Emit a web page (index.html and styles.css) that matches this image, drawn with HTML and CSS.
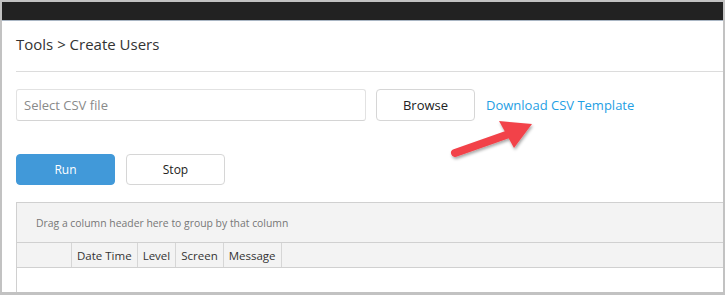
FILE: index.html
```html
<!DOCTYPE html>
<html lang="en">
<head>
  <meta charset="utf-8">
  <title>Tools - Create Users</title>
  <link rel="stylesheet" href="styles.css">
</head>
<body>
  <div class="frame">
    <div class="topbar"></div>

    <div class="content">
      <h1 class="title">Tools &gt; Create Users</h1>

      <div class="file-row">
        <input class="file-input" type="text" placeholder="Select CSV file">
        <button class="btn">Browse</button>
        <a class="link" href="#">Download CSV Template</a>
        <svg class="arrow" width="100" height="50" viewBox="0 0 100 50">
          <defs>
            <filter id="shadow" x="-20%" y="-40%" width="140%" height="180%">
              <feDropShadow dx="1" dy="2" stdDeviation="1.5" flood-color="#000" flood-opacity="0.35"/>
            </filter>
          </defs>
          <g filter="url(#shadow)" fill="#f2434a">
            <path d="M8 36 L62 17" stroke="#f2434a" stroke-width="8" stroke-linecap="round"/>
            <polygon points="52,4 85,7 67,31"/>
          </g>
        </svg>
      </div>

      <div class="action-row">
        <button class="btn btn-primary">Run</button>
        <button class="btn">Stop</button>
      </div>

      <div class="grid">
        <div class="group-panel">Drag a column header here to group by that column</div>
        <div class="grid-header">
          <div class="cell cell-first"></div>
          <div class="cell">Date Time</div>
          <div class="cell">Level</div>
          <div class="cell">Screen</div>
          <div class="cell">Message</div>
        </div>
        <div class="grid-body"></div>
      </div>
    </div>
  </div>
</body>
</html>
```

FILE: styles.css
```css
body {
  margin: 0;
  font-family: 'Open Sans', 'Noto Sans', Arial, sans-serif;
  color: #333;
  background: #fff;
}

.frame {
  width: 725px;
  height: 295px;
  box-sizing: border-box;
  border: 2px solid #c2c2c2;
  border-bottom-width: 3px;
  overflow: hidden;
  display: flex;
  flex-direction: column;
}

.topbar {
  height: 18px;
  background: #222;
  border-bottom: 1px solid #aab6c4;
  flex-shrink: 0;
}

.content {
  padding-left: 14px;
  flex: 1;
  display: flex;
  flex-direction: column;
}

.title {
  margin: 0;
  height: 50px;
  line-height: 47px;
  font-size: 15px;
  font-weight: normal;
  color: #333;
  border-bottom: 1px solid #dcdcdc;
}

.file-row {
  display: flex;
  align-items: center;
  margin-top: 17px;
  position: relative;
}

.file-input {
  width: 350px;
  height: 32px;
  box-sizing: border-box;
  border: 1px solid #e2e2e2;
  border-bottom-color: #d4d4d4;
  border-radius: 3px;
  padding: 0 7px;
  font-family: inherit;
  font-size: 13px;
  color: #333;
  outline: none;
}

.file-input::placeholder {
  color: #8a8a8a;
}

.btn {
  width: 99px;
  height: 32px;
  margin-left: 10px;
  box-sizing: border-box;
  border: 1px solid #d6d6d6;
  border-radius: 4px;
  background: #fff;
  font-family: inherit;
  font-size: 12px;
  color: #222;
  cursor: pointer;
}

.file-row .btn {
  font-size: 13px;
}

.link {
  margin-left: 11px;
  margin-top: -1px;
  font-size: 13px;
  color: #1fa0e4;
  text-decoration: none;
}

/* red callout arrow over the page */
.arrow {
  position: absolute;
  left: 431px;
  top: 28px;
}

.action-row {
  display: flex;
  margin-top: 33px;
}

.action-row .btn {
  height: 31px;
  margin-left: 11px;
}

.action-row .btn:first-child {
  margin-left: 0;
}

.btn-primary {
  background: #4199d9;
  border-color: #4199d9;
  color: #fff;
}

.grid {
  margin-top: 17px;
  flex: 1;
  border: 1px solid #d0d0d0;
  border-right: none;
  border-bottom: none;
  display: flex;
  flex-direction: column;
}

.group-panel {
  height: 39px;
  line-height: 40px;
  background: #f3f3f3;
  border-bottom: 1px solid #d0d0d0;
  padding-left: 19px;
  font-size: 10.4px;
  color: #777;
}

.grid-header {
  display: flex;
  height: 24px;
  background: #f3f3f3;
  border-bottom: 1px solid #d0d0d0;
}

.cell {
  line-height: 25px;
  padding: 0 5px;
  font-size: 11.5px;
  color: #333;
  border-right: 1px solid #d6d6d6;
}

.cell-first {
  width: 44px;
}

.grid-body {
  flex: 1;
  background: #fff;
}
```
